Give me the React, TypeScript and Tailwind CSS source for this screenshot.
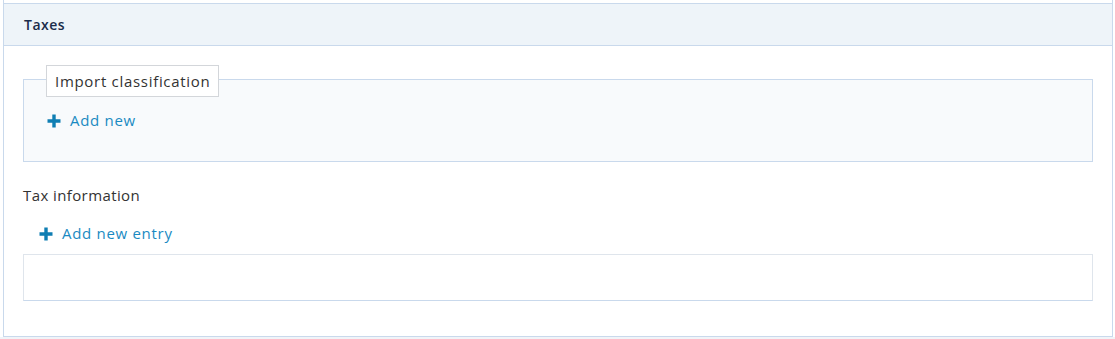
import React from 'react';

function PlusIcon({ className = '' }: { className?: string }) {
  return (
    <svg viewBox="0 0 14 14" className={className} aria-hidden="true">
      <path d="M7 0.5v13M0.5 7h13" stroke="currentColor" strokeWidth="3.4" fill="none" />
    </svg>
  );
}

function AddLink({ label }: { label: string }) {
  return (
    <button type="button" className="flex items-center gap-[9px] text-[15px] tracking-[0.7px] text-[#1a8ac2] leading-none">
      <PlusIcon className="w-[14px] h-[14px] text-[#0f7eb3]" />
      <span>{label}</span>
    </button>
  );
}

export default function App() {
  return (
    <div className="w-[1115px] h-[339px] bg-white font-['Open_Sans',sans-serif] text-[#333]">
      <div className="ml-[3px] w-[1110px] bg-white border-x border-b border-[#c9d9ec] h-[337px] flex flex-col">
        <div className="h-[3px]" />
        <div className="h-[43px] bg-[#eef4f9] border-y border-[#c9d9ec] flex items-center px-[20px]">
          <h3 className="text-[14px] font-semibold tracking-[0.5px] text-[#1b2c4b]">Taxes</h3>
        </div>

        <div className="px-[19px] pt-[33px] flex flex-col">
          <div className="h-[83px] border border-[#c9d9ec] bg-[#f8fafc] px-[23px] flex flex-col">
            <div className="-mt-[15px] -ml-[1px] w-fit px-[8px] h-[32px] flex items-center bg-white border border-[#d3d6da] text-[15px] tracking-[0.7px] text-[#333]">
              Import classification
            </div>
            <div className="mt-[16px]">
              <AddLink label="Add new" />
            </div>
          </div>

          <p className="mt-[26px] text-[15px] tracking-[0.4px] text-[#333] leading-none">Tax information</p>

          <div className="mt-[23px] pl-[16px]">
            <AddLink label="Add new entry" />
          </div>

          <div className="mt-[13px] h-[47px] bg-white border border-[#dfe5ec] border-b-[#c9d9ec]" />
        </div>
      </div>
      <div className="h-[2px] bg-[#f1f4f8]" />
    </div>
  );
}
